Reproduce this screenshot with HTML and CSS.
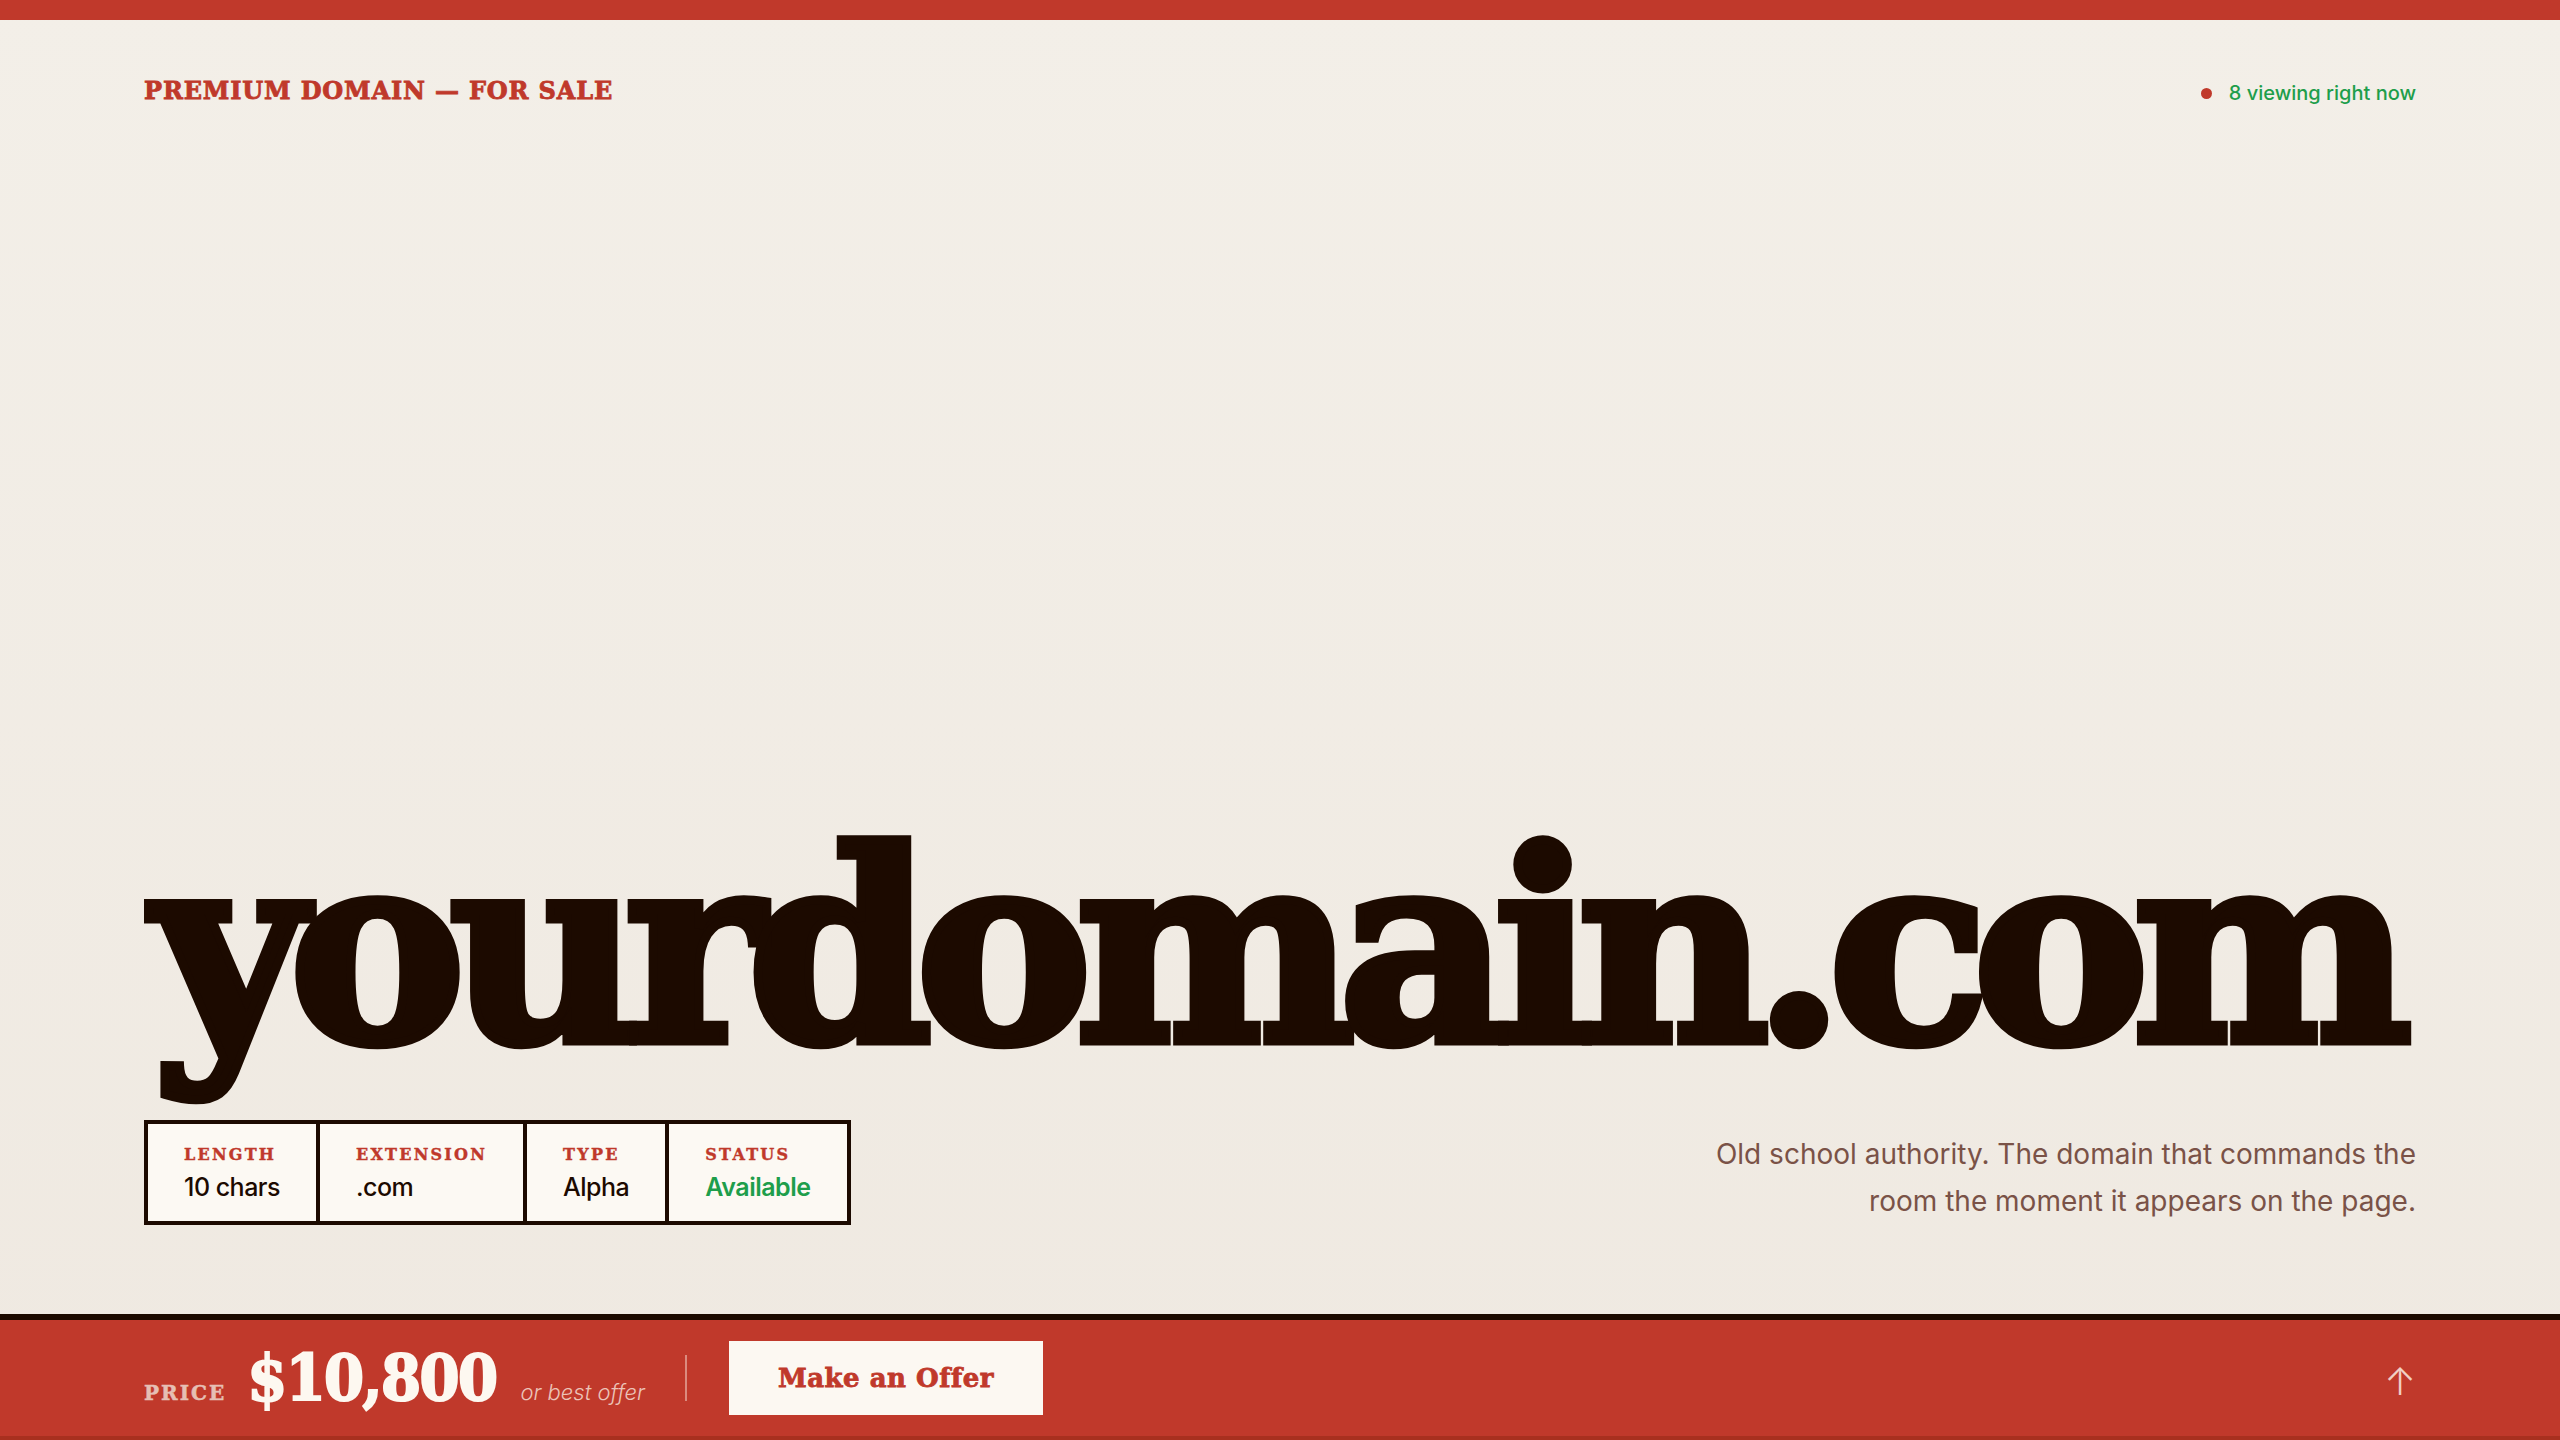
FILE: index.html
```html
<!DOCTYPE html>
<html lang="en">
<head>
<meta charset="utf-8">
<title>yourdomain.com — Premium Domain For Sale</title>
<link rel="stylesheet" href="styles.css">
</head>
<body>
<div class="page">
  <div class="topbar"></div>
  <header class="header">
    <div class="eyebrow">PREMIUM DOMAIN — FOR SALE</div>
    <div class="viewing"><span class="dot"></span><span>8 viewing right now</span></div>
  </header>
  <main class="hero">
    <h1 class="domain">yourdomain.com</h1>
    <div class="hero-row">
      <div class="stats">
        <div class="stat"><div class="stat-label">LENGTH</div><div class="stat-value">10 chars</div></div>
        <div class="stat"><div class="stat-label">EXTENSION</div><div class="stat-value">.com</div></div>
        <div class="stat"><div class="stat-label">TYPE</div><div class="stat-value">Alpha</div></div>
        <div class="stat"><div class="stat-label">STATUS</div><div class="stat-value ok">Available</div></div>
      </div>
      <p class="desc">Old school authority. The domain that commands the room the moment it appears on the page.</p>
    </div>
  </main>
  <footer class="pricebar">
    <div class="price-group">
      <span class="price-label">PRICE</span>
      <span class="price">$10,800</span>
      <span class="obo">or best offer</span>
    </div>
    <span class="divider"></span>
    <button class="offer">Make an Offer</button>
    <span class="up">↑</span>
  </footer>
</div>
</body>
</html>
```

FILE: styles.css
```css
* { box-sizing: border-box; }
html, body { margin: 0; padding: 0; }
body {
  font-family: "Inter", "Noto Sans", sans-serif;
  background: linear-gradient(180deg, #f3efe8 0%, #efe9e1 100%);
  color: #1c0a00;
}
.page {
  min-height: 100vh;
  height: 100vh;
  display: flex;
  flex-direction: column;
}
.topbar {
  height: 20px;
  background: #c0392b;
  flex: none;
}
.header {
  display: flex;
  justify-content: space-between;
  align-items: center;
  padding: 55px 144px 0;
}
.eyebrow {
  font-family: "DejaVu Serif", serif;
  font-weight: 700;
  font-size: 24px;
  letter-spacing: 0.035em;
  color: #c0392b;
  -webkit-text-stroke: 0.8px #c0392b;
}
.viewing {
  display: flex;
  align-items: center;
  gap: 17px;
  color: #1e9e4b;
  font-size: 20px;
  font-weight: 500;
  padding-top: 6px;
}
.dot {
  width: 11px;
  height: 11px;
  border-radius: 50%;
  background: #c0392b;
}
.hero {
  flex: 1;
  display: flex;
  flex-direction: column;
  justify-content: flex-end;
  padding: 0 144px 89px;
}
.domain {
  margin: 0 0 40px 8px;
  font-family: "DejaVu Serif", serif;
  font-weight: 700;
  font-size: 265px;
  line-height: 1;
  letter-spacing: -0.064em;
  color: #1c0a00;
  -webkit-text-stroke: 9px #1c0a00;
  white-space: nowrap;
}
.hero-row {
  display: flex;
  justify-content: space-between;
  align-items: flex-end;
}
.stats {
  display: flex;
  border: 4px solid #1c0a00;
  background: #fcf9f3;
}
.stat {
  padding: 22px 36px 19px;
  display: flex;
  flex-direction: column;
  gap: 8px;
}
.stat + .stat { border-left: 4px solid #1c0a00; }
.stat-label {
  font-family: "DejaVu Serif", serif;
  font-weight: 700;
  font-size: 16px;
  letter-spacing: 0.14em;
  color: #c0392b;
  line-height: 18px;
  -webkit-text-stroke: 0.4px #c0392b;
}
.stat-value {
  font-size: 25px;
  font-weight: 500;
  letter-spacing: -0.02em;
  line-height: 30px;
  color: #1c0a00;
}
.stat-value.ok { color: #1e9e4b; font-weight: 600; }
.desc {
  margin: 0;
  max-width: 740px;
  text-align: right;
  font-size: 28px;
  line-height: 47px;
  color: #7a5247;
}
.pricebar {
  flex: none;
  height: 126px;
  border-top: 6px solid #1c0a00;
  border-bottom: 4px solid #a8301f;
  background: #c0392b;
  display: flex;
  align-items: center;
  padding: 0 144px;
}
.price-group {
  display: flex;
  align-items: baseline;
  gap: 21px;
}
.price-label {
  font-family: "DejaVu Serif", serif;
  font-weight: 700;
  font-size: 20px;
  letter-spacing: 0.1em;
  color: #e6bfb4;
  -webkit-text-stroke: 0.5px #e6bfb4;
}
.price {
  font-family: "DejaVu Serif Condensed", "DejaVu Serif", serif;
  font-weight: 700;
  font-size: 64px;
  line-height: 1;
  letter-spacing: -0.025em;
  color: #fdf8f0;
  -webkit-text-stroke: 2px #fdf8f0;
}
.obo {
  margin-left: 3px;
  font-size: 22px;
  font-style: italic;
  font-weight: 300;
  color: #ecc3b8;
}
.divider {
  width: 2px;
  height: 46px;
  background: rgba(253, 240, 230, 0.45);
  margin: 0 42px 0 40px;
}
.offer {
  height: 74px;
  padding: 0 49px;
  border: none;
  background: #fcf8f2;
  color: #c0392b;
  font-family: "DejaVu Serif", serif;
  font-weight: 700;
  font-size: 26px;
  letter-spacing: 0.02em;
  -webkit-text-stroke: 0.8px #c0392b;
}
.up {
  margin-left: auto;
  margin-right: 0;
  color: #f0cfc4;
  font-size: 38px;
  font-weight: 300;
  line-height: 1;
  padding-top: 6px;
}
```
